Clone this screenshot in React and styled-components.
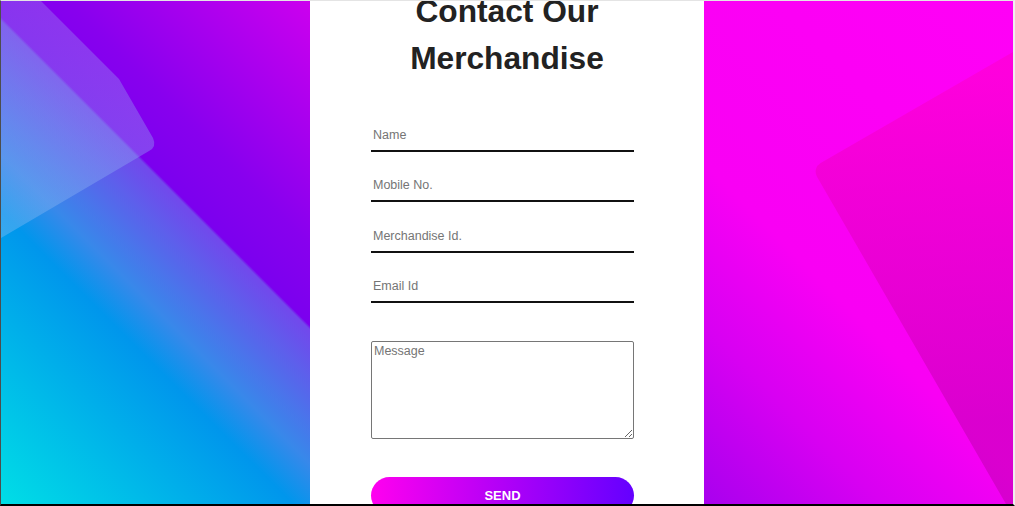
import styled, { createGlobalStyle } from 'styled-components';

const GlobalStyle = createGlobalStyle`
  html, body {
    margin: 0;
    padding: 0;
    background: #fff;
    overflow: hidden;
  }
`;

const Frame = styled.div`
  display: grid;
  grid-template-columns: 309px 394px 309px;
  height: 503px;
  border-top: 1px solid #e4e4e4;
  border-left: 1px solid #4d4d4d;
  border-right: 2px solid #efefef;
  border-bottom: 2px solid #000;
  overflow: hidden;
`;

const Art = styled.svg`
  display: block;
  width: 100%;
  height: 100%;
`;

const Center = styled.section`
  background: #fff;
  overflow: hidden;
  text-align: center;
`;

const Title = styled.h1`
  margin: -13px 0 38px;
  font: 700 31.7px/47px "Liberation Sans", Arial, sans-serif;
  color: #222;
`;

const Form = styled.form`
  display: flex;
  flex-direction: column;
  align-items: flex-start;
  padding-left: 61px;
  text-align: left;
`;

const Field = styled.input`
  box-sizing: border-box;
  width: 263px;
  margin: 0 0 18.35px;
  padding: 8px 2px;
  border: none;
  border-bottom: 2px solid #111;
  outline: none;
  background: transparent;
  font: 12.5px "Liberation Sans", Arial, sans-serif;
  color: #222;

  &::placeholder { color: #757575; }
`;

const Message = styled.textarea`
  box-sizing: border-box;
  width: 263px;
  height: 98px;
  margin: 20px 0 0;
  padding: 2px;
  border: 1px solid #767676;
  border-radius: 2px;
  outline: none;
  font: 12.5px "Liberation Sans", Arial, sans-serif;
  resize: vertical;

  &::placeholder { color: #757575; }
`;

const SendButton = styled.button`
  width: 263px;
  height: 37px;
  margin-top: 38px;
  border: none;
  border-radius: 19px;
  background: linear-gradient(to right, #ff00ef, #6400ff);
  color: #fff;
  font: 700 13px "Liberation Sans", Arial, sans-serif;
  cursor: pointer;
`;

const LeftArt = () => (
  <Art viewBox="0 0 309 503" preserveAspectRatio="none">
    <defs>
      <linearGradient id="lbase" gradientUnits="userSpaceOnUse" x1="0" y1="503" x2="406" y2="97">
        <stop offset="0" stopColor="#00dee6" />
        <stop offset="0.36" stopColor="#0096ec" />
        <stop offset="0.43" stopColor="#3888ea" />
        <stop offset="0.595" stopColor="#7248ec" />
        <stop offset="0.6" stopColor="#7b00ee" />
        <stop offset="0.7" stopColor="#8800ee" />
        <stop offset="1" stopColor="#cc00ee" />
      </linearGradient>
      <linearGradient id="lshape" x1="0" y1="0" x2="0" y2="1">
        <stop offset="0" stopColor="#9c88f0" />
        <stop offset="1" stopColor="#8cc0f4" />
      </linearGradient>
    </defs>
    <rect width="309" height="503" fill="url(#lbase)" />
    <path
      d="M0 0 L40 0 L118 78 L152 137 Q156 146 148 150 L0 237 Z"
      fill="url(#lshape)" fillOpacity="0.38"
    />
  </Art>
);

const RightArt = () => (
  <Art viewBox="0 0 309 503" preserveAspectRatio="none">
    <defs>
      <linearGradient id="rbase" gradientUnits="userSpaceOnUse" x1="0" y1="503" x2="406" y2="97">
        <stop offset="0" stopColor="#a800ee" />
        <stop offset="0.22" stopColor="#d800f2" />
        <stop offset="0.42" stopColor="#f900f4" />
        <stop offset="1" stopColor="#ff00f6" />
      </linearGradient>
      <linearGradient id="rshape" gradientUnits="userSpaceOnUse" x1="150" y1="480" x2="309" y2="170">
        <stop offset="0" stopColor="#bc00aa" />
        <stop offset="1" stopColor="#ff00c4" />
      </linearGradient>
    </defs>
    <rect width="309" height="503" fill="url(#rbase)" />
    <rect
      x="108" y="167" width="420" height="520" rx="10"
      fill="url(#rshape)" fillOpacity="0.5"
      transform="rotate(-30 108 167)"
    />
  </Art>
);

const App = () => {
  const fields = ['Name', 'Mobile No.', 'Merchandise Id.', 'Email Id'];

  return (
    <>
      <GlobalStyle />
      <Frame>
        <LeftArt />
        <Center>
          <Title>Contact Our<br />Merchandise</Title>
          <Form onSubmit={e => e.preventDefault()}>
            {fields.map(f => (
              <Field key={f} type="text" placeholder={f} />
            ))}
            <Message placeholder="Message" />
            <SendButton type="submit">SEND</SendButton>
          </Form>
        </Center>
        <RightArt />
      </Frame>
    </>
  );
};

export default App;
